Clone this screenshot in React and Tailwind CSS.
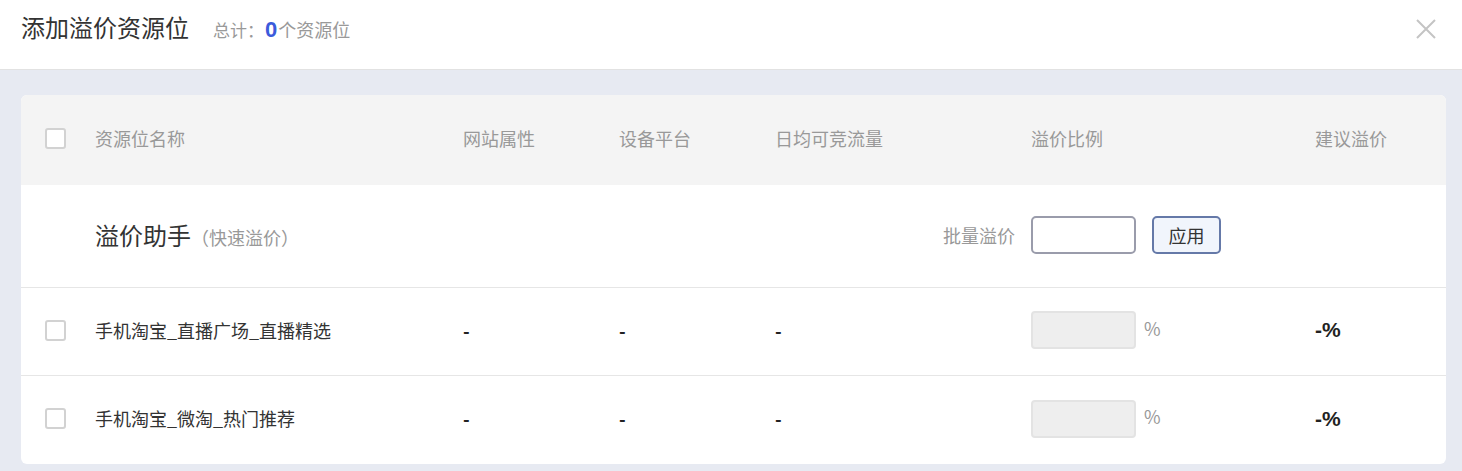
import React from "react";

const font = { fontFamily: '"Noto Sans CJK SC", "Noto Sans", sans-serif' };

function Checkbox() {
  return <div className="w-[21px] h-[21px] rounded-[3px] border-2 border-[#d2d2d2] bg-white" />;
}

const cols = "grid grid-cols-[50px_368px_156px_156px_256px_284px_1fr] pl-[24px] items-center";

function Row({ name, last }) {
  return (
    <div className={`${cols} h-[88px] pb-[3px] ${last ? "" : "border-b border-[#e6e6e6]"}`}>
      <Checkbox />
      <div className="text-[18px] text-[#333]">{name}</div>
      <div className="text-[18px] text-[#222] font-bold">-</div>
      <div className="text-[18px] text-[#222] font-bold">-</div>
      <div className="text-[18px] text-[#222] font-bold">-</div>
      <div className="flex items-center gap-[8px]">
        <div className="w-[105px] h-[38px] rounded-[4px] border-2 border-[#e3e3e3] bg-[#eeeeee]" />
        <span className="text-[18px] text-[#999] -mt-[4px]">%</span>
      </div>
      <div className="text-[21px] font-bold text-[#222]" style={{ fontFamily: '"Liberation Sans", Arial, sans-serif' }}>-%</div>
    </div>
  );
}

export default function App() {
  return (
    <div className="w-[1462px] h-[471px] bg-[#e7eaf2] overflow-hidden" style={font}>
      <div className="h-[70px] bg-white border-b border-[#e2e2e2] flex items-start justify-between pl-[21px] pr-[26px]">
        <div className="flex items-baseline pt-[10px]">
          <span className="text-[24px] text-[#333] leading-[34px]">添加溢价资源位</span>
          <span className="ml-[24px] text-[17px] text-[#999]">总计：</span>
          <span className="text-[22px] font-bold text-[#3b5bdb] mx-[1px]" style={{ fontFamily: '"Liberation Sans", Arial, sans-serif' }}>0</span>
          <span className="text-[18px] text-[#999]">个资源位</span>
        </div>
        <svg className="mt-[19px]" width="20" height="20" viewBox="0 0 20 20">
          <path d="M1 1 L19 19 M19 1 L1 19" stroke="#c4c4c4" strokeWidth="2" fill="none" />
        </svg>
      </div>
      <div className="pt-[25px] pl-[21px]">
        <div className="w-[1425px] bg-white rounded-[6px] overflow-hidden">
          <div className={`${cols} h-[90px] pb-[4px] bg-[#f4f4f4] text-[18px] text-[#999]`}>
            <Checkbox />
            <div>资源位名称</div>
            <div>网站属性</div>
            <div>设备平台</div>
            <div>日均可竞流量</div>
            <div>溢价比例</div>
            <div>建议溢价</div>
          </div>
          <div className={`${cols} h-[103px] pb-[2px] border-b border-[#e6e6e6]`}>
            <div />
            <div className="col-span-4 flex items-center justify-between pr-[16px]">
              <div className="flex items-baseline">
                <span className="text-[24px] text-[#333]">溢价助手</span>
                <span className="text-[18px] text-[#999]">（快速溢价）</span>
              </div>
              <span className="text-[18px] text-[#999]">批量溢价</span>
            </div>
            <div className="flex items-center gap-[16px]">
              <div className="w-[105px] h-[38px] rounded-[5px] border-2 border-[#9a9cab] bg-white" />
              <button className="w-[69px] h-[38px] rounded-[5px] border-2 border-[#6579a8] bg-[#f1f5fc] text-[18px] text-[#333]">应用</button>
            </div>
            <div />
          </div>
          <Row name="手机淘宝_直播广场_直播精选" />
          <Row name="手机淘宝_微淘_热门推荐" last />
        </div>
      </div>
    </div>
  );
}
